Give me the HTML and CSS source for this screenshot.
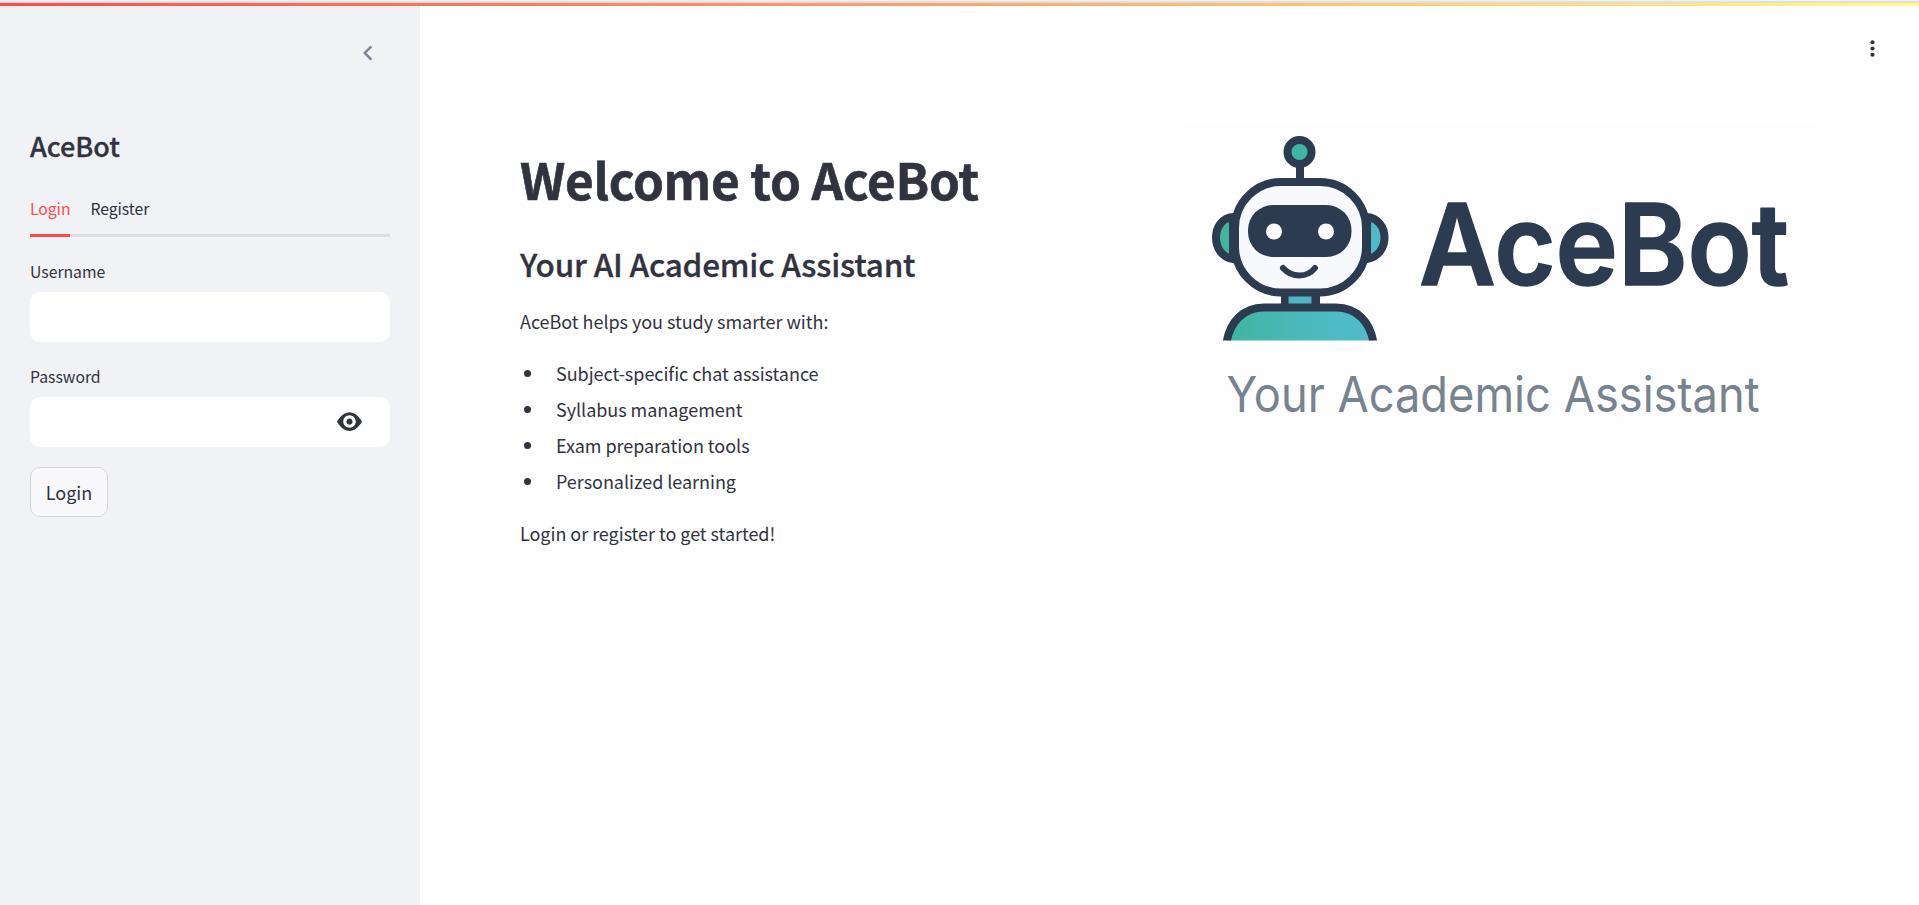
FILE: index.html
```html
<!DOCTYPE html>
<html lang="en">
<head>
<meta charset="utf-8">
<title>AceBot</title>
<link rel="stylesheet" href="styles.css">
</head>
<body>
<div class="decoration"></div>
<div class="app">
  <aside class="sidebar">
    <div class="sidebar-header">
      <svg class="collapse" viewBox="0 0 24 24"><path d="M15.41 7.41 14 6l-6 6 6 6 1.41-1.41L10.83 12z"/></svg>
    </div>
    <h2 class="brand">AceBot</h2>
    <nav class="tabs"><span class="tab tab-active">Login</span><span class="tab">Register</span></nav>
    <label class="field-label" for="user">Username</label>
    <div class="field"><input id="user" type="text"></div>
    <label class="field-label" for="pass">Password</label>
    <div class="field">
      <input id="pass" type="password">
      <svg class="eye" viewBox="0 0 8 8"><path transform="translate(0 1)" d="M4.03 0C1.5 0 0 3 0 3s1.5 3 4.03 3C6.5 6 8 3 8 3S6.5 0 4.03 0zM4 1c1.11 0 2 .9 2 2 0 1.11-.89 2-2 2-1.1 0-2-.89-2-2 0-1.1.9-2 2-2zm0 1c-.55 0-1 .45-1 1s.45 1 1 1 1-.45 1-1-.45-1-1-1z"/></svg>
    </div>
    <button class="submit">Login</button>
  </aside>
  <main class="main">
    <section class="intro">
      <h1 class="title">Welcome to AceBot</h1>
      <h2 class="subtitle">Your AI Academic Assistant</h2>
      <p class="text">AceBot helps you study smarter with:</p>
      <ul class="features">
        <li>Subject-specific chat assistance</li>
        <li>Syllabus management</li>
        <li>Exam preparation tools</li>
        <li>Personalized learning</li>
      </ul>
      <p class="text closing">Login or register to get started!</p>
    </section>
    <svg class="logo" viewBox="1181 123 639 320">
      <defs>
        <linearGradient id="body" x1="0" y1="0" x2="1" y2="0"><stop offset="0" stop-color="#3fb49f"/><stop offset=".5" stop-color="#4bb9bb"/><stop offset="1" stop-color="#52bccb"/></linearGradient>
        <clipPath id="bust"><path d="M1200 123h200v217.500h-200z"/></clipPath>
      </defs>
      <g class="robot" clip-path="url(#bust)">
        <path class="line" d="M1300 164v18"/>
        <circle class="line" cx="1299.500" cy="152" r="12" fill="#3fb5a6"/>
        <path class="line" d="M1233 217c-11 1-17 10-17 20.500s6 20 17 21.500z" fill="#45b39b"/>
        <path class="line" d="M1367 217c11 1 17.500 10 17.500 20.500s-6.500 20-17.500 21.500z" fill="#4fb9c6"/>
        <path d="M1281 294h39v14h-39z" fill="#2d3b50"/>
        <path d="M1288.500 294h23v14h-23z" fill="#4fb5c6"/>
        <path class="line" d="M1226 346c3-25 18-38.500 38-38.500h72c20 0 35 13.500 38 38.500" fill="url(#body)"/>
        <rect class="line" x="1235" y="182" width="131" height="110.500" rx="46" fill="#f8f9fc"/>
        <rect x="1248" y="205" width="103.500" height="52" rx="25" fill="#2d3b50"/>
        <circle cx="1274" cy="231.500" r="8" fill="#fff"/>
        <circle cx="1326" cy="231.500" r="8" fill="#fff"/>
        <path class="smile" d="M1283 268c9 10 24 10 32 0"/>
      </g>
      <text class="logo-name" x="1419" y="285" textLength="370" lengthAdjust="spacingAndGlyphs">AceBot</text>
      <text class="logo-tag" x="1226.500" y="412" textLength="533" lengthAdjust="spacingAndGlyphs">Your Academic Assistant</text>
    </svg>
    <svg class="menu" viewBox="0 0 24 24"><circle cx="12" cy="6" r="2"/><circle cx="12" cy="12" r="2"/><circle cx="12" cy="18" r="2"/></svg>
  </main>
</div>
</body>
</html>
```
FILE: styles.css
```css
* { box-sizing: border-box; }
body {
  margin: 0;
  height: 905px;
  overflow: hidden;
  display: flex;
  flex-direction: column;
  background: #fff;
  color: #31333f;
  font-family: "Noto Sans CJK SC", "Noto Sans", sans-serif;
  font-size: 18px;
  line-height: 32px;
}
h1, h2, p, ul { margin: 0; }
.decoration {
  height: 6px;
  border-top: 1px solid #f0f2f6;
  background: linear-gradient(#dfe0e4, #dfe0e4) 0 0 / 100% 2px no-repeat, linear-gradient(90deg, #ff4b4b, #fffd80);
}
.app { flex: 1; display: flex; }
.sidebar {
  width: 420px;
  padding: 24px 30px;
  background: #f0f2f6;
  display: flex;
  flex-direction: column;
}
.sidebar-header { display: flex; justify-content: flex-end; height: 96px; padding: 8px 7px 0 0; }
.collapse { width: 30px; height: 30px; fill: #808495; }
.brand { font-size: 27px; font-weight: 500; line-height: 36px; margin-top: 2px; -webkit-text-stroke: .3px; }
.tabs {
  display: flex;
  gap: 20px;
  height: 50px;
  margin-top: 23px;
  border-bottom: 3px solid #dcdee3;
  font-size: 15.75px;
  letter-spacing: -.05px;
}
.tab { height: 50px; padding-top: 6px; line-height: 32px; }
.tab-active { color: #ff4b4b; border-bottom: 3px solid #ff4b4b; }
.field-label { font-size: 15.75px; line-height: 26px; height: 33px; margin-top: 22px; }
.field {
  display: flex;
  align-items: center;
  height: 50px;
  padding-right: 28px;
  border-radius: 10px;
  background: #fff;
}
.field input { flex: 1; min-width: 0; border: 0; background: none; outline: none; }
.eye { width: 25px; height: 25px; fill: #31333f; margin-top: -1px; }
.submit {
  align-self: flex-start;
  width: 78px;
  height: 50px;
  margin-top: 20px;
  padding: 0;
  border: 1px solid #d5d6da;
  border-radius: 10px;
  background: #f9f9fb;
  color: inherit;
  font: inherit;
}
.main { flex: 1; display: flex; align-items: flex-start; padding: 0 34px 0 100px; }
.intro { width: 661px; padding-top: 140px; }
.title { font-size: 49.5px; font-weight: 700; line-height: 66px; letter-spacing: -.33px; -webkit-text-stroke: .6px; }
.subtitle { font-size: 31.5px; font-weight: 500; line-height: 42px; margin-top: 30px; letter-spacing: -.2px; -webkit-text-stroke: .3px; }
.text { margin-top: 21px; letter-spacing: -.04px; }
.features { list-style: none; padding: 0; margin-top: 18px; line-height: 36px; letter-spacing: -.04px; }
.features li { display: flex; align-items: center; }
.features li::before { content: ""; width: 7px; height: 7px; margin: 0 25px 0 4px; border-radius: 50%; background: #31333f; }
.closing { margin-top: 18px; }
.logo { width: 639px; height: 320px; margin-top: 117px; background: #fefeff; }
.menu { width: 25px; height: 25px; margin: 30px 0 0 auto; fill: #31333f; }
.robot .line { stroke: #2d3b50; stroke-width: 8; }
.robot .smile { fill: none; stroke: #2d3b50; stroke-width: 6; stroke-linecap: round; }
.logo-name { font: 600 113px Inter, sans-serif; fill: #2d3b50; stroke: #2d3b50; stroke-width: 1.5; stroke-linejoin: round; }
.logo-tag { font: 400 49px Inter, sans-serif; fill: #788390; }
```
